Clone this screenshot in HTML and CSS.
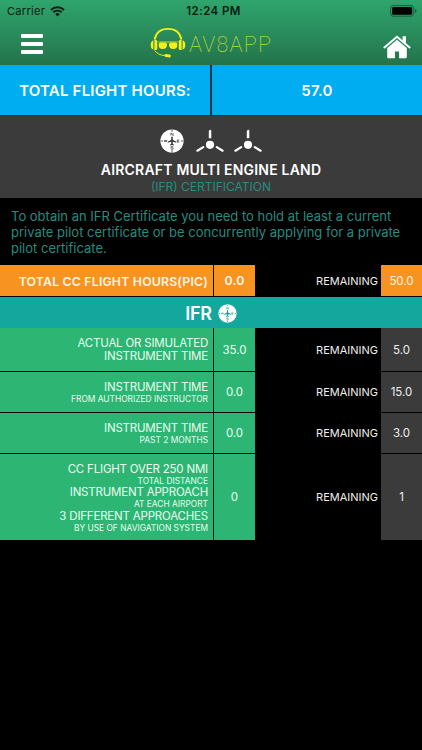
FILE: index.html
```html
<!DOCTYPE html>
<html lang="en">
<head>
    <meta charset="UTF-8">
    <meta name="viewport" content="width=device-width, initial-scale=1.0">
    <title>AV8APP</title>
    <link rel="stylesheet" href="styles.css">
</head>
<body>

    <svg class="symbols" width="0" height="0">
        <symbol id="compass" viewBox="0 0 24 24">
            <circle cx="12" cy="12" r="11.6" fill="#fff"/>
            <g stroke="currentColor" fill="none">
                <path d="M12 1.2v1.6M12 21.2v1.6M1.2 12h1.6M21.2 12h1.6" stroke-width="1"/>
                <path d="M10.9 6.6V3.9l2.2 2.7V3.9M13.2 17.6h-2.3v1.2h2.2v1.4h-2.3M4.3 11l.5 2 .8-2 .7 2 .6-2M19.3 11h-2v2.1h2M17.3 12h1.8" stroke-width=".7"/>
            </g>
            <path fill="currentColor" d="M12 7.6c.5 0 .8.6.8 1.3v1.8l3.5 2v1l-3.5-.9v1.9l1.2 1v.7l-2-.5-2 .5v-.7l1.2-1v-1.9l-3.5.9v-1l3.5-2V8.9c0-.7.3-1.3.8-1.3z"/>
        </symbol>
        <symbol id="prop" viewBox="0 0 28 24">
            <circle cx="14" cy="15.8" r="4.1" fill="#fff"/>
            <path d="M12.8 9.2V2.6Q13 .9 14.3.8q1 0 1 1v7.4z" fill="#fff"/>
            <path d="M7.2 18.1 1.4 21.7M20.8 18.1l5.8 3.6" stroke="#fff" stroke-width="2.2" stroke-linecap="round"/>
        </symbol>
    </svg>

    <header>
        <div class="status">
            <div class="carrier">
                <span>Carrier</span>
                <svg width="15" height="11" viewBox="0 0 15 11" fill="none" stroke="#071c10" stroke-width="1.9">
                    <path d="M1 4a9.2 9.2 0 0 1 13 0M3.3 6.3a6 6 0 0 1 8.4 0"/>
                    <path d="M7.5 10.4 5.2 8.1a3.3 3.3 0 0 1 4.6 0z" fill="#071c10" stroke="none"/>
                </svg>
            </div>
            <div class="time">12:24 PM</div>
            <div class="battery">
                <svg width="27" height="12" viewBox="0 0 27 12">
                    <rect x=".6" y=".6" width="23" height="10.6" rx="2.5" fill="none" stroke="#185a37"/>
                    <rect x="2.1" y="2.1" width="20" height="7.6" rx="1.2"/>
                    <path d="M25 4q1.5.6 1.5 2T25 8z" fill="#185a37"/>
                </svg>
            </div>
        </div>
        <nav>
            <div class="menu"><span></span><span></span><span></span></div>
            <div class="logo">
                <svg width="36" height="32" viewBox="0 0 36 32" fill="#f2f01c">
                    <path d="M4.6 12.5C6 5.5 11 1.9 18 1.9s12 3.6 13.4 10.6" fill="none" stroke="#f2f01c" stroke-width="1.9"/>
                    <path d="M3.4 13.3C1.5 13.8.7 15.8.7 18s.8 4.1 2.7 4.6zM4.4 12.7h1.3q1.6 0 1.6 1.6v7.2q0 1.6-1.6 1.6H4.4zM32.6 13.3c1.9.5 2.7 2.5 2.7 4.7s-.8 4.1-2.7 4.6zM31.6 12.7h-1.3q-1.6 0-1.6 1.6v7.2q0 1.6 1.6 1.6h1.3z"/>
                    <path d="M8.2 14.6h19.6v.8H8.2z"/>
                    <path d="M10.6 15.6h4.7q1.7 0 1.7 2.1 0 4.3-4.4 4.3-4 0-4-4 0-2.4 2-2.4zM25.4 15.6h-4.7q-1.7 0-1.7 2.1 0 4.3 4.4 4.3 4 0 4-4 0-2.4-2-2.4z"/>
                    <path d="M4.8 23.4c1.7 3 5 4.7 10.2 5.2" fill="none" stroke="#f2f01c"/>
                    <rect x="14.6" y="27.2" width="6.3" height="3" rx="1.4" transform="rotate(7 17 28)"/>
                </svg>
                <span>AV8APP</span>
            </div>
            <svg class="home" width="28" height="24" viewBox="0 0 28 24" fill="#fff">
                <path d="M1.4 12.4 14 1.8l12.6 10.6" fill="none" stroke="#fff" stroke-width="2" stroke-linecap="round"/>
                <path d="M19.6 1.2h3.4v7l-3.4-2.9z"/>
                <path d="M14 4.8 23.8 13V22q0 1.2-1.2 1.2h-6.5v-6.6h-4.2v6.6H5.4q-1.2 0-1.2-1.2v-9z"/>
            </svg>
        </nav>
    </header>

    <div class="total">
        <div>TOTAL FLIGHT HOURS:</div>
        <div>57.0</div>
    </div>

    <div class="aircraft">
        <div class="icons">
            <svg class="compass"><use href="#compass"/></svg>
            <svg class="prop"><use href="#prop"/></svg>
            <svg class="prop"><use href="#prop"/></svg>
        </div>
        <h1>AIRCRAFT MULTI ENGINE LAND</h1>
        <h2>(IFR) CERTIFICATION</h2>
    </div>

    <p class="intro">To obtain an IFR Certificate you need to hold at least a current<br>private pilot certificate or be concurrently applying for a private<br>pilot certificate.</p>

    <div class="row cc">
        <div class="label">TOTAL CC FLIGHT HOURS(PIC)</div>
        <div class="value">0.0</div>
        <div class="remaining">REMAINING</div>
        <div class="left">50.0</div>
    </div>

    <div class="section">
        <span>IFR</span>
        <svg width="19" height="19"><use href="#compass"/></svg>
    </div>

    <div class="row simulated">
        <div class="label"><span>ACTUAL OR SIMULATED</span><span>INSTRUMENT TIME</span></div>
        <div class="value">35.0</div>
        <div class="remaining">REMAINING</div>
        <div class="left">5.0</div>
    </div>
    <div class="row">
        <div class="label"><span>INSTRUMENT TIME</span><small>FROM AUTHORIZED INSTRUCTOR</small></div>
        <div class="value">0.0</div>
        <div class="remaining">REMAINING</div>
        <div class="left">15.0</div>
    </div>
    <div class="row">
        <div class="label"><span>INSTRUMENT TIME</span><small>PAST 2 MONTHS</small></div>
        <div class="value">0.0</div>
        <div class="remaining">REMAINING</div>
        <div class="left">3.0</div>
    </div>
    <div class="row approach">
        <div class="label">
            <span>CC FLIGHT OVER 250 NMI</span><small>TOTAL DISTANCE</small>
            <span>INSTRUMENT APPROACH</span><small>AT EACH AIRPORT</small>
            <span>3 DIFFERENT APPROACHES</span><small>BY USE OF NAVIGATION SYSTEM</small>
        </div>
        <div class="value">0</div>
        <div class="remaining">REMAINING</div>
        <div class="left">1</div>
    </div>

</body>
</html>
```
FILE: styles.css
```css
* {
    box-sizing: border-box;
}

body {
    margin: 0;
    background: #000;
    color: #fff;
    font-family: Inter, 'Liberation Sans', sans-serif;
    font-size: 11.5px;
}

.symbols {
    position: absolute;
}

header {
    height: 65px;
    background: linear-gradient(#2fa56d, #24734b);
}

.status {
    display: grid;
    grid-template-columns: 1fr auto 1fr;
    align-items: center;
    height: 22px;
    padding: 0 5px 0 7px;
    color: #071c10;
    font-size: 11px;
}

.carrier {
    display: flex;
    align-items: center;
    gap: 5px;
    letter-spacing: 0.3px;
}

.time {
    padding-left: 3px;
    font-size: 11.5px;
    font-weight: 600;
    letter-spacing: 0.4px;
}

.battery {
    display: flex;
    justify-content: flex-end;
}

nav {
    display: flex;
    height: 43px;
    padding: 0 11px 0 21px;
}

.menu {
    display: flex;
    flex-direction: column;
    gap: 4px;
    width: 22px;
    padding-top: 12px;
}

.menu span {
    height: 4px;
    border-radius: 1px;
    background: #fff;
}

.logo {
    display: flex;
    margin-left: 107px;
    padding-top: 5px;
    color: #a5cd35;
}

.logo span {
    margin-left: 3px;
    font-family: Roboto, Inter, sans-serif;
    font-size: 21.5px;
    font-weight: 200;
    letter-spacing: 1.2px;
    line-height: 35px;
}

.home {
    margin: 13px 0 0 auto;
}

.total {
    display: grid;
    grid-template-columns: 210px 210px;
    gap: 2px;
    height: 51px;
    background: #0d3444;
    border-bottom: 1px solid #0d3444;
    font-size: 15px;
    font-weight: 600;
    letter-spacing: 0.2px;
}

.total div {
    display: flex;
    align-items: center;
    justify-content: center;
    background: #00adf1;
}

.aircraft {
    height: 82px;
    padding-top: 13px;
    background: #3b3b3b;
    text-align: center;
}

.icons {
    display: flex;
    justify-content: center;
    gap: 10px;
    color: #3b3b3b;
}

.compass {
    width: 24px;
    height: 24px;
    margin-right: 2px;
}

.prop {
    width: 28px;
    height: 24px;
}

h1 {
    margin: 8px 0 0;
    font-size: 14px;
    font-weight: 600;
    letter-spacing: 0.2px;
    line-height: 17px;
}

h2 {
    margin: 0;
    color: #268b80;
    font-size: 12px;
    font-weight: 400;
    line-height: 17px;
}

.intro {
    height: 67px;
    margin: 0;
    padding: 10px 0 0 11px;
    color: #268b80;
    font-size: 13px;
    line-height: 16px;
    white-space: nowrap;
}

.row {
    display: grid;
    grid-template-columns: 213px 41px 124px 41px;
    gap: 1px;
    height: 40px;
    margin-bottom: 1px;
}

.row > div {
    display: flex;
    align-items: center;
    justify-content: center;
}

.row .label {
    flex-direction: column;
    align-items: flex-end;
    padding: 1px 5px 0 0;
    letter-spacing: -0.2px;
    line-height: 13px;
}

.row .label,
.row .value {
    background: #2db573;
    color: #e6fff0;
}

.row .remaining {
    justify-content: flex-end;
    padding-right: 2px;
    font-size: 11px;
    color: #eee;
}

.row .left {
    background: #3b3b3b;
    color: #eee;
}

.row small {
    font-size: 8.4px;
    letter-spacing: 0;
    line-height: 10.5px;
}

.cc {
    height: 31px;
}

.row.cc .label,
.row.cc .value,
.row.cc .left {
    background: #f79421;
    color: #fff4e4;
}

.row.cc .label,
.row.cc .value {
    font-size: 12.3px;
    font-weight: 600;
    letter-spacing: 0.18px;
}

.section {
    display: flex;
    align-items: center;
    justify-content: center;
    gap: 6px;
    height: 31px;
    padding-top: 1px;
    background: #14a79d;
    color: #14a79d;
}

.section span {
    color: #fff;
    font-size: 18px;
    font-weight: 600;
    letter-spacing: -0.2px;
}

.simulated {
    height: 43px;
}

.approach {
    height: 86px;
}

.row.approach .label {
    padding-top: 2px;
}
```
